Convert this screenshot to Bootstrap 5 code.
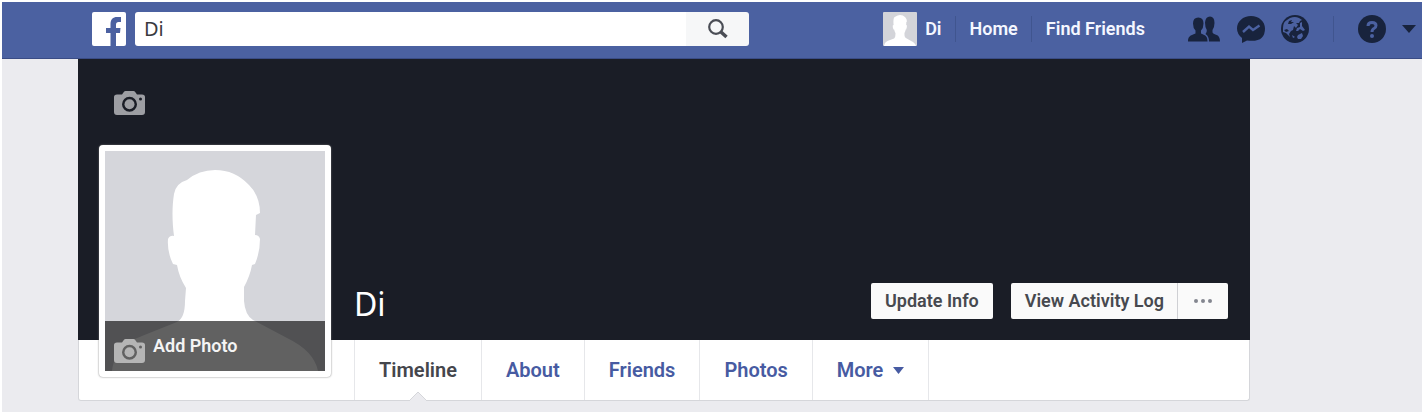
<!DOCTYPE html>
<html lang="en">
<head>
<meta charset="utf-8">
<meta name="viewport" content="width=device-width, initial-scale=1">
<title>Di</title>
<link href="https://cdn.jsdelivr.net/npm/bootstrap@5.3.0/dist/css/bootstrap.min.css" rel="stylesheet">
<style>
  body { background: #fff; font-family: Roboto, "Liberation Sans", sans-serif; padding: 2px 3px 3px 2px; }
  .page-shell { background: #ebebef; padding-bottom: 11px; }
  .top-bar { background: #4b61a1; height: 57px; border-bottom: 1px solid #3a4c85; padding: 0 6px 3px 90px; color: #18233d; }
  .site-logo { width: 34px; height: 34px; margin-right: 9px; }
  .search-box { height: 34px; }
  .search-box .form-control { border: 0; border-radius: 3px 0 0 3px; font: 20px/24px "Noto Sans", sans-serif; color: #3a3a3f; padding: 0 9px; }
  .search-box .btn { width: 63px; background: #f6f7f8; border: 0; border-radius: 0 3px 3px 0; color: #4a4d55; padding: 0; }
  .account-nav { margin-left: 134px; font-size: 18px; line-height: 24px; font-weight: 600; }
  .account-nav a { color: #f5f7ff; text-decoration: none; }
  .bar-rule { width: 1px; height: 26px; background: #40558f; margin: 0 14px 0 13px; }
  .jewels { margin-left: 43px; }
  .icon-btn { background: none; border: 0; padding: 0; color: inherit; display: flex; }
  .profile { margin: 0 172px 0 76px; }
  .cover { background: #1a1d26; height: 281px; padding: 0 22px 21px 276px; }
  .cover-camera { position: absolute; left: 36px; top: 32px; color: #9d9ea3; }
  .photo-frame { position: absolute; left: 21px; bottom: -37px; width: 232px; padding: 6px; background: #fff; border-radius: 4px; box-shadow: 0 0 2px #777; }
  .photo-inner { background: #d5d6db; }
  .add-photo { left: 0; right: 0; bottom: 0; height: 50px; background: rgba(0,0,0,.62); border: 0; color: #f4f4f4; font-size: 18px; line-height: 24px; font-weight: 600; padding: 0 9px; }
  .add-photo svg { color: #b5b5b5; margin-top: 10px; }
  .profile-name { font: 32px/30px "Noto Sans", sans-serif; color: #fff; margin: 0; }
  .cover .btn { --bs-btn-bg: #fafafa; --bs-btn-color: #47494f; border: 0; border-radius: 2px; height: 36px; font-size: 18px; line-height: 24px; font-weight: 600; padding: 0 14px; }
  .cover-actions { gap: 18px; }
  .cover .more-btn { border-left: 1px solid #cfd0d4; width: 51px; }
  .tab-strip { background: #fff; border: 1px solid #d5d6da; border-top: 0; border-radius: 0 0 3px 3px; padding-left: 275px; }
  .tab-strip a { color: #475ba2; font-size: 20px; line-height: 24px; font-weight: 600; padding: 18px 24px; text-decoration: none; border-right: 1px solid #e6e7ea; display: flex; align-items: center; position: relative; }
  .tab-strip a.first-tab { color: #45464c; border-left: 1px solid #e6e7ea; }
  .tab-strip .more-tab { gap: 10px; }
  .tab-notch { position: absolute; bottom: -1px; left: 50%; margin-left: -9px; }
</style>
</head>
<body>
<svg class="d-none" aria-hidden="true">
  <symbol id="person" viewBox="0 0 220 220"><path fill="#fff" d="M7 220C10 198 22 191 37 185L72 171Q80 167 80 150L81 137Q74 126 72 114L68 113Q62 101 63 88Q65 84 69 85C67 70 67 55 69 43Q71 32 82 29Q94 19 110 19Q130 19 144 34Q155 45 155 62L151 64L150 84Q154 84 155 88Q155 101 150 113L147 114Q145 125 139 136L139 150Q140 164 148 169L182 187Q209 200 213 220Z"/></symbol>
  <symbol id="camera" viewBox="0 0 31 24"><path fill="currentColor" fill-rule="evenodd" d="M3 3.500H8L10 .8Q10.500 0 11.500 0H19.500Q20.500 0 21 .8L23 3.500H28Q31 3.500 31 6V21Q31 24 28 24H3Q0 24 0 21V6Q0 3.500 3 3.500ZM15.500 5.800A7.500 7.500 0 1 0 15.500 20.800A7.500 7.500 0 1 0 15.500 5.800ZM26.500 6.500A1.500 1.500 0 1 0 26.500 9.500A1.500 1.500 0 1 0 26.500 6.500Z"/><circle cx="15.500" cy="13.300" r="5" fill="currentColor"/></symbol>
</svg>
<div class="page-shell">
  <header class="top-bar d-flex align-items-center">
    <a href="#" class="site-logo d-block flex-shrink-0" aria-label="Facebook"><svg class="d-block" width="34" height="34" viewBox="0 0 34 34"><rect width="34" height="34" rx="2" fill="#fff"/><path fill="#4b61a1" d="M18.500 34V21H14V16H18.500V12C18.500 7.500 21 5 25 5H29V10H26.500Q24 10 24 12.500V16H28.500L28 21H24V34Z"/></svg></a>
    <form class="search-box d-flex flex-grow-1" role="search">
      <input class="form-control" type="text" value="Di" aria-label="Search">
      <button class="btn flex-shrink-0" type="button" aria-label="Search"><svg width="22" height="22" viewBox="0 0 22 22" fill="none" stroke="currentColor"><circle cx="9" cy="9" r="6.800" stroke-width="2.200"/><path d="M14 14L19.500 19" stroke-width="3.500"/></svg></button>
    </form>
    <nav class="account-nav d-flex align-items-center flex-shrink-0" aria-label="Account">
      <a href="#" class="d-flex align-items-center"><svg class="me-2" width="34" height="34"><rect width="34" height="34" rx="1" fill="#d3d4d9"/><use href="#person" width="34" height="34"/></svg>Di</a>
      <span class="bar-rule"></span><a href="#">Home</a>
      <span class="bar-rule"></span><a href="#">Find Friends</a>
      <div class="jewels d-flex align-items-center gap-3">
        <button class="icon-btn" type="button" aria-label="Friend requests"><svg width="33" height="26" viewBox="0 0 33 26" fill="currentColor"><path d="M21 25.500Q21 20 17.500 18Q19 16.500 18.800 14Q17 11 17 6.500Q17.500 .5 22 .5Q26.500 .5 26.500 7Q26.500 11 24.500 14V16.500Q25 17.800 28 18.800Q32 20 32 25.500Z"/><path d="M0 25.500C0 20.500 2 19.500 7.500 17.500V14.500Q5 12 5 7.500Q5 1.500 10.300 1.500Q15.500 1.500 15.500 7.500Q15.500 12 13 14.500V17.500C18 19.500 19.500 20.500 19.500 25.500Z"/></svg></button>
        <button class="icon-btn" type="button" aria-label="Messages"><svg width="28" height="28" viewBox="0 0 28 28"><path fill="currentColor" d="M14 1C6 1 0 6.500 0 13.500Q0 19 5 23V28L10 25.500Q28 28 28 13.500C28 6.500 22 1 14 1Z"/><path d="M6 17L12 11.500L16 15L22.500 10.500" fill="none" stroke="#4b61a1" stroke-width="2.400"/></svg></button>
        <button class="icon-btn" type="button" aria-label="Notifications"><svg width="28" height="28" viewBox="0 0 28 28"><circle cx="14" cy="14" r="14" fill="currentColor"/><path fill="#4b61a1" d="M2 13Q2 7 6 5L9 3Q14 1 18 3L21 5L19 6L18 8L15 8L17 10L15 13L13 11L12 15L10 16L8 19L9 22L5 18L2 17ZM19 8L21 7L21 11L24 15L22 16L19 14L17 16L15 16L16 13L19 12ZM17 20L21 18L22 21L20 24L17 24L16 22ZM11 20L14 22L12 23Z"/><path fill="currentColor" d="M8 6L11 5L10 7L13 7L10 9L7 9ZM3 15L6 14L8 16L5 17Z"/></svg></button>
      </div>
      <span class="bar-rule mx-4"></span>
      <button class="icon-btn" type="button" aria-label="Help"><svg width="28" height="28" viewBox="0 0 28 28"><circle cx="14" cy="14" r="14" fill="currentColor"/><path d="M10 11Q10 7.500 14 7.500Q18 7.500 18 10.500Q18 12.500 16 13.500Q14 14.500 14 17" fill="none" stroke="#4b61a1" stroke-width="3"/><circle cx="14" cy="21" r="2" fill="#4b61a1"/></svg></button>
      <button class="icon-btn ms-3" type="button" aria-label="Account menu"><svg width="14" height="8" viewBox="0 0 14 8"><path fill="currentColor" d="M0 0H14L7 8Z"/></svg></button>
    </nav>
  </header>
  <main class="profile">
    <section class="cover position-relative d-flex align-items-end justify-content-between">
      <button class="icon-btn cover-camera" type="button" aria-label="Add cover photo"><svg width="31" height="24"><use href="#camera"/></svg></button>
      <div class="photo-frame z-1"><div class="photo-inner position-relative"><svg class="d-block w-100" viewBox="0 0 220 220"><use href="#person"/></svg>
        <button class="add-photo position-absolute d-flex align-items-center" type="button"><svg class="me-2" width="31" height="24"><use href="#camera"/></svg>Add Photo</button></div></div>
      <h1 class="profile-name align-self-end">Di</h1>
      <div class="cover-actions d-flex">
        <button class="btn" type="button">Update Info</button>
        <div class="btn-group"><button class="btn" type="button">View Activity Log</button><button class="btn more-btn" type="button" aria-label="More options"><svg class="d-block mx-auto" width="18" height="4" viewBox="0 0 18 4" fill="#83868f"><circle cx="2" cy="2" r="2"/><circle cx="9" cy="2" r="2"/><circle cx="16" cy="2" r="2"/></svg></button></div>
      </div>
    </section>
    <nav class="tab-strip d-flex" aria-label="Profile">
      <a href="#" class="first-tab" aria-current="page">Timeline<svg class="tab-notch" width="18" height="10" viewBox="0 0 18 10"><path d="M0 10L9 1L18 10" fill="#ebebef" stroke="#d5d6da"/></svg></a>
      <a href="#">About</a><a href="#">Friends</a><a href="#">Photos</a>
      <a href="#" class="more-tab">More<svg width="11" height="7" viewBox="0 0 11 7"><path fill="currentColor" d="M0 0H11L5.500 7Z"/></svg></a>
    </nav>
  </main>
</div>
<script src="https://cdn.jsdelivr.net/npm/bootstrap@5.3.0/dist/js/bootstrap.bundle.min.js"></script>
</body>
</html>
